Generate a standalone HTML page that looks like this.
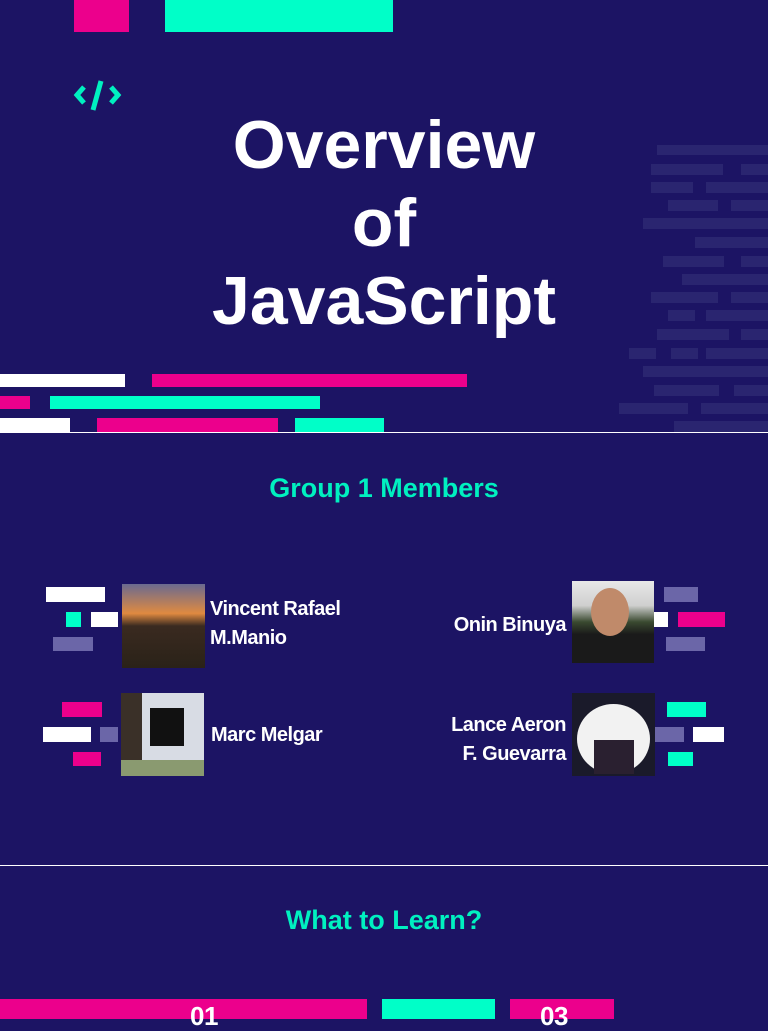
<!DOCTYPE html>
<html><head><meta charset="utf-8"><style>
*{margin:0;padding:0;box-sizing:border-box}
body{width:768px;height:1024px;background:#1c1464;position:relative;overflow:hidden;font-family:"Liberation Sans",sans-serif}
.r{position:absolute}
.p{background:#ec008c}.c{background:#00ffc8}.w{background:#fff}.g{background:#6b66a8}.f{background:#2a2570}
.t{position:absolute;color:#fff;font-weight:bold;font-size:20px;line-height:29px;letter-spacing:-0.5px}
h1{position:absolute;left:0;width:768px;top:106px;text-align:center;color:#fff;font-size:68px;line-height:78px;font-weight:bold;letter-spacing:0}
h2{position:absolute;left:0;width:768px;text-align:center;color:#00f0c0;font-size:27px;font-weight:bold}
</style></head><body>
<div class="r p" style="left:74px;top:0;width:55px;height:32px"></div>
<div class="r c" style="left:165px;top:0;width:228px;height:32px"></div>
<svg class="r" style="left:72px;top:78px" width="52" height="36" viewBox="0 0 52 36"><g fill="none" stroke="#00f0c0" stroke-width="5"><path d="M12 9 L5 17 L12 25"/><path d="M39 9 L46 17 L39 25"/><path d="M29 3 L21 32"/></g></svg>
<h1>Overview<br>of<br>JavaScript</h1>
<div class="r f" style="left:657px;top:145px;width:111px;height:10px"></div>
<div class="r f" style="left:651px;top:164px;width:72px;height:11px"></div><div class="r f" style="left:741px;top:164px;width:27px;height:11px"></div>
<div class="r f" style="left:651px;top:182px;width:42px;height:11px"></div><div class="r f" style="left:706px;top:182px;width:62px;height:11px"></div>
<div class="r f" style="left:668px;top:200px;width:50px;height:11px"></div><div class="r f" style="left:731px;top:200px;width:37px;height:11px"></div>
<div class="r f" style="left:643px;top:218px;width:125px;height:11px"></div>
<div class="r f" style="left:695px;top:237px;width:73px;height:11px"></div>
<div class="r f" style="left:663px;top:256px;width:61px;height:11px"></div><div class="r f" style="left:741px;top:256px;width:27px;height:11px"></div>
<div class="r f" style="left:682px;top:274px;width:86px;height:11px"></div>
<div class="r f" style="left:651px;top:292px;width:67px;height:11px"></div><div class="r f" style="left:731px;top:292px;width:37px;height:11px"></div>
<div class="r f" style="left:668px;top:310px;width:27px;height:11px"></div><div class="r f" style="left:706px;top:310px;width:62px;height:11px"></div>
<div class="r f" style="left:657px;top:329px;width:72px;height:11px"></div><div class="r f" style="left:741px;top:329px;width:27px;height:11px"></div>
<div class="r f" style="left:629px;top:348px;width:27px;height:11px"></div><div class="r f" style="left:671px;top:348px;width:27px;height:11px"></div><div class="r f" style="left:706px;top:348px;width:62px;height:11px"></div>
<div class="r f" style="left:643px;top:366px;width:125px;height:11px"></div>
<div class="r f" style="left:654px;top:385px;width:65px;height:11px"></div><div class="r f" style="left:734px;top:385px;width:34px;height:11px"></div>
<div class="r f" style="left:619px;top:403px;width:69px;height:11px"></div><div class="r f" style="left:701px;top:403px;width:67px;height:11px"></div>
<div class="r f" style="left:674px;top:421px;width:94px;height:11px"></div>
<div class="r w" style="left:0;top:374px;width:125px;height:13px"></div>
<div class="r p" style="left:152px;top:374px;width:315px;height:13px"></div>
<div class="r p" style="left:0;top:396px;width:30px;height:13px"></div>
<div class="r c" style="left:50px;top:396px;width:270px;height:13px"></div>
<div class="r w" style="left:0;top:418px;width:70px;height:14px"></div>
<div class="r p" style="left:97px;top:418px;width:181px;height:14px"></div>
<div class="r c" style="left:295px;top:418px;width:89px;height:14px"></div>
<div class="r w" style="left:0;top:432px;width:768px;height:1px"></div>
<h2 style="top:473px">Group 1 Members</h2>
<div class="r w" style="left:46px;top:587px;width:59px;height:15px"></div>
<div class="r c" style="left:66px;top:612px;width:15px;height:15px"></div>
<div class="r w" style="left:91px;top:612px;width:27px;height:15px"></div>
<div class="r g" style="left:53px;top:637px;width:40px;height:14px"></div>
<div class="r" style="left:122px;top:584px;width:83px;height:84px;background:linear-gradient(#6a6a90,#e08a40 35%,#3a2a20 50%,#2a2218)"></div>
<div class="t" style="left:210px;top:595px">Vincent Rafael<br>M.Manio</div>
<div class="r p" style="left:62px;top:702px;width:40px;height:15px"></div>
<div class="r w" style="left:43px;top:727px;width:48px;height:15px"></div>
<div class="r g" style="left:100px;top:727px;width:18px;height:15px"></div>
<div class="r p" style="left:73px;top:752px;width:28px;height:14px"></div>
<div class="r" style="left:121px;top:693px;width:83px;height:83px;background:linear-gradient(90deg,#3a3028 0 25%,#d8dce4 25%);"></div>
<div class="r" style="left:150px;top:708px;width:34px;height:38px;background:#111"></div>
<div class="r" style="left:121px;top:760px;width:83px;height:16px;background:#8a9a70"></div>
<div class="t" style="left:211px;top:721px">Marc Melgar</div>
<div class="t" style="left:400px;top:611px;text-align:right;width:166px">Onin Binuya</div>
<div class="r" style="left:572px;top:581px;width:82px;height:82px;background:linear-gradient(#e8e8e8,#cfcfcf 30%,#3a4a30 50%,#1a1a1a 65%)"></div>
<div class="r" style="left:591px;top:588px;width:38px;height:48px;border-radius:50%;background:#c08a6a"></div>
<div class="r g" style="left:664px;top:587px;width:34px;height:15px"></div>
<div class="r w" style="left:654px;top:612px;width:14px;height:15px"></div>
<div class="r p" style="left:678px;top:612px;width:47px;height:15px"></div>
<div class="r g" style="left:666px;top:637px;width:39px;height:14px"></div>
<div class="t" style="left:400px;top:711px;text-align:right;width:166px">Lance Aeron<br>F. Guevarra</div>
<div class="r" style="left:572px;top:693px;width:83px;height:83px;background:#1a1a2a"></div>
<div class="r" style="left:577px;top:704px;width:73px;height:70px;border-radius:50%;background:#f2f2f2"></div>
<div class="r" style="left:594px;top:740px;width:40px;height:34px;background:#2a2030"></div>
<div class="r c" style="left:667px;top:702px;width:39px;height:15px"></div>
<div class="r g" style="left:655px;top:727px;width:29px;height:15px"></div>
<div class="r w" style="left:693px;top:727px;width:31px;height:15px"></div>
<div class="r c" style="left:668px;top:752px;width:25px;height:14px"></div>
<div class="r w" style="left:0;top:865px;width:768px;height:1px"></div>
<h2 style="top:905px">What to Learn?</h2>
<div class="r p" style="left:0;top:999px;width:367px;height:20px"></div>
<div class="r c" style="left:382px;top:999px;width:113px;height:20px"></div>
<div class="r p" style="left:510px;top:999px;width:104px;height:20px"></div>
<div class="t" style="left:190px;top:1002px;font-size:26px">01</div>
<div class="t" style="left:540px;top:1002px;font-size:26px">03</div>
</body></html>
